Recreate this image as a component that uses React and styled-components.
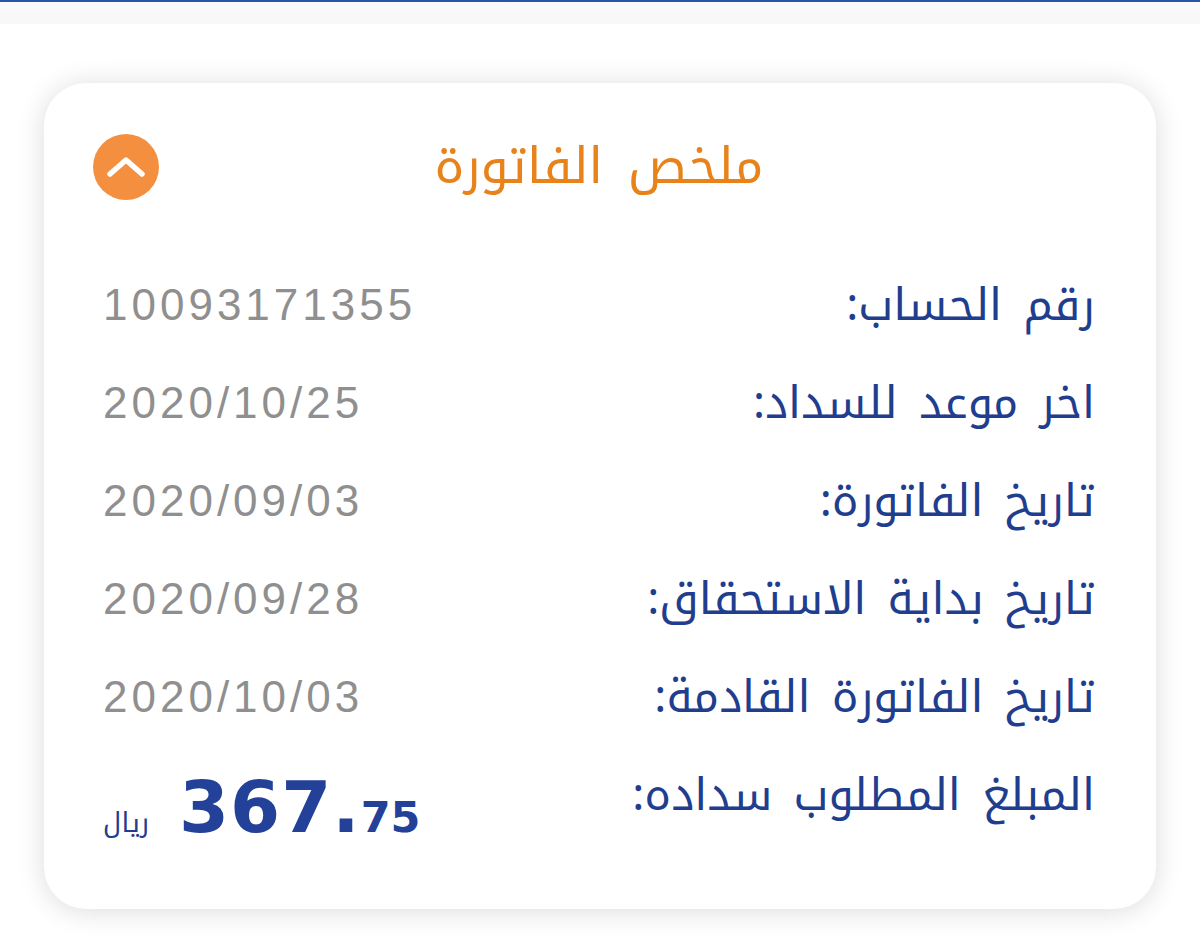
import React from 'react';
import styled, { createGlobalStyle } from 'styled-components';

const arabic = '"Noto Kufi Arabic", "DejaVu Sans", sans-serif';

const GlobalStyle = createGlobalStyle`
  html, body {
    margin: 0;
    padding: 0;
    background: #ffffff;
  }
  body {
    font-family: ${arabic};
  }
`;

const Page = styled.div`
  width: 1200px;
  min-height: 938px;
  background: #ffffff;
  overflow: hidden;
`;

const TopBar = styled.div`
  height: 2px;
  background: #2a56a6;
`;

const TopBand = styled.div`
  height: 22px;
  background: linear-gradient(#fbfcff, #f9f8fa 40%, #f8f8f8);
`;

const Card = styled.section`
  direction: rtl;
  margin: 59px 44px 0;
  padding: 50px 61px 65px 59px;
  background: #ffffff;
  border-radius: 42px;
  box-shadow: 0 2px 28px rgba(0, 0, 0, 0.14);
`;

const Header = styled.div`
  position: relative;
  display: flex;
  align-items: center;
  justify-content: center;
  height: 68px;
  margin-bottom: 55px;
`;

const Title = styled.h2`
  margin: 0;
  font-family: ${arabic};
  font-weight: normal;
  font-size: 50px;
  line-height: 68px;
  color: #e8831c;
  word-spacing: 8px;
`;

const ToggleButton = styled.button`
  position: absolute;
  left: -10px;
  top: 1px;
  width: 66px;
  height: 66px;
  border: none;
  border-radius: 50%;
  background: #f48f3f;
  display: flex;
  align-items: center;
  justify-content: center;
  padding: 0;
  cursor: pointer;
`;

const Row = styled.div`
  display: flex;
  align-items: center;
  justify-content: space-between;
  height: 98px;
`;

const Label = styled.span`
  font-family: ${arabic};
  font-size: 45px;
  line-height: 60px;
  color: #1f3e8e;
  word-spacing: 6px;
`;

const Value = styled.span`
  direction: ltr;
  font-family: "Liberation Sans", Arial, sans-serif;
  font-size: 44px;
  color: #8f8f8f;
  letter-spacing: 4px;
`;

const Amount = styled.div`
  direction: ltr;
  display: flex;
  align-items: baseline;
  gap: 30px;
  margin-top: 34px;
`;

const Currency = styled.span`
  font-family: ${arabic};
  font-size: 27px;
  color: #1f3e8e;
`;

const Figure = styled.span`
  font-family: "DejaVu Sans", sans-serif;
  font-weight: bold;
  font-size: 72px;
  line-height: 72px;
  color: #234199;
  letter-spacing: 1px;
`;

const Fraction = styled.span`
  font-size: 43px;
  letter-spacing: 0;
`;

const rows = [
  ['رقم الحساب:', '10093171355'],
  ['اخر موعد للسداد:', '2020/10/25'],
  ['تاريخ الفاتورة:', '2020/09/03'],
  ['تاريخ بداية الاستحقاق:', '2020/09/28'],
  ['تاريخ الفاتورة القادمة:', '2020/10/03'],
];

const App = () => (
  <Page>
    <GlobalStyle />
    <TopBar />
    <TopBand />
    <Card>
      <Header>
        <Title>ملخص الفاتورة</Title>
        <ToggleButton aria-label="collapse">
          <svg width="42" height="26" viewBox="0 0 42 26">
            <path
              d="M5 20 L21 6 L37 20"
              fill="none"
              stroke="#ffffff"
              strokeWidth="5.5"
              strokeLinecap="round"
              strokeLinejoin="round"
            />
          </svg>
        </ToggleButton>
      </Header>

      {rows.map(([label, value]) => (
        <Row key={label}>
          <Label>{label}</Label>
          <Value>{value}</Value>
        </Row>
      ))}

      <Row>
        <Label>المبلغ المطلوب سداده:</Label>
        <Amount>
          <Currency>ريال</Currency>
          <Figure>
            367.<Fraction>75</Fraction>
          </Figure>
        </Amount>
      </Row>
    </Card>
  </Page>
);

export default App;
